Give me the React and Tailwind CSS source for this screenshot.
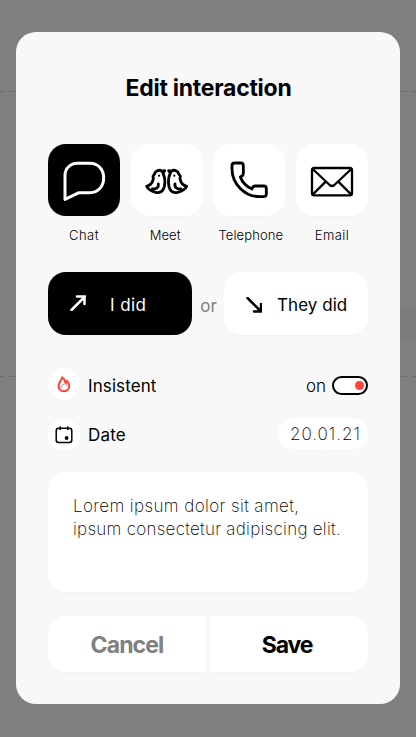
import React from "react";

const stroke = { fill: "none", stroke: "currentColor", strokeLinecap: "round", strokeLinejoin: "round" };

function ChatIcon() {
  return (
    <svg viewBox="0 0 216 216" className="size-[72px]" {...stroke} strokeWidth="9">
      <path d="M51 166V94C51 73 67 58 88 58H126C151 58 167 77 167 102C167 128 150 146 126 146H93Z" />
    </svg>
  );
}

function Bird() {
  return (
    <g>
      <path d="M47 127C57 124 65 116 67 104L66 97L70 91C73 79 86 76 93 82L101 80L96 88C101 98 103 114 100 128C96 143 86 148 74 145C62 142 52 137 47 127Z" />
      <path d="M64 135C76 136 84 130 82 120" />
      <circle cx="84" cy="95" r="3.2" fill="currentColor" stroke="none" />
    </g>
  );
}

function MeetIcon() {
  return (
    <svg viewBox="0 0 216 216" className="size-[72px]" {...stroke} strokeWidth="8.5">
      <Bird />
      <g transform="translate(214 0) scale(-1 1)"><Bird /></g>
    </svg>
  );
}

function PhoneIcon() {
  return (
    <svg viewBox="0 0 216 216" className="size-[72px]" {...stroke} strokeWidth="8.5">
      <path d="M65 57H83Q91 57 91 65V88Q91 94 87 96L82 99C88 115 101 128 117 135L119 130Q121 126 126 126H152Q160 126 160 134V150Q160 158 152 158H141C95 158 57 120 57 74V65Q57 57 65 57Z" />
    </svg>
  );
}

function EmailIcon() {
  return (
    <svg viewBox="0 0 216 216" className="size-[72px]" {...stroke} strokeWidth="7">
      <rect x="48" y="72" width="120" height="82" rx="7" />
      <path d="M50 75L101 123Q108 129 115 123L166 75M50 152L89 113M166 152L127 113" />
    </svg>
  );
}

function Channel({ label, active, children, labelClass }) {
  return (
    <button className="flex w-[72px] flex-col items-center">
      <span className={active
        ? "flex size-[72px] rounded-[18px] bg-black text-white"
        : "flex size-[72px] rounded-[18px] bg-white text-black shadow-[0_1px_1px_rgba(0,0,0,0.025)]"}>
        {children}
      </span>
      <span className={"mt-[9px] whitespace-nowrap text-[13px] leading-5 font-light " + labelClass}>{label}</span>
    </button>
  );
}

function BackdropLine() {
  return (
    <div className="flex h-px w-full justify-between">
      <div className="flex gap-[5px]"><i className="w-1 bg-[#6c6c6c]" /><i className="w-[7px] bg-[#6c6c6c]" /></div>
      <div className="flex gap-[5px]"><i className="w-[7px] bg-[#6c6c6c]" /><i className="w-1 bg-[#6c6c6c]" /></div>
    </div>
  );
}

export default function App() {
  return (
    <div className="relative h-[737px] w-[416px] overflow-hidden bg-[#808080] px-4 pt-8 font-['Inter',sans-serif] text-black">
      <div className="absolute inset-0 flex flex-col pt-[91px]">
        <BackdropLine />
        <div className="mt-[216px] h-8 w-6 self-end rounded-l bg-[#7b7b7b]" />
        <div className="mt-9"><BackdropLine /></div>
      </div>
      <main className="relative flex h-[672px] flex-col rounded-[20px] bg-[#f8f8f8] px-8">
        <h1 className="mt-10 pl-px text-center text-[23px] leading-8 font-bold tracking-[-0.25px]">Edit interaction</h1>

        <div className="mt-10 flex h-[102px] justify-between">
          <Channel label="Chat" active labelClass="tracking-[0.5px]"><ChatIcon /></Channel>
          <Channel label="Meet" labelClass="mr-[3px] tracking-[0.1px]"><MeetIcon /></Channel>
          <Channel label="Telephone" labelClass="ml-[3px] tracking-[0.1px]"><PhoneIcon /></Channel>
          <Channel label="Email" labelClass="tracking-[0.4px]"><EmailIcon /></Channel>
        </div>

        <div className="mt-[26px] flex h-[63px] items-center">
          <button className="flex h-full w-36 items-center rounded-[18px] bg-black pl-[22px] text-white">
            <svg viewBox="0 0 16 16" className="size-4 -translate-y-px" {...stroke} strokeWidth="2.5">
              <path d="M1.5 15L15 1.5M7 1.5H14.5V9" />
            </svg>
            <span className="ml-6 pt-[5px] text-[17px] tracking-[0.4px]">I did</span>
          </button>
          <span className="w-8 pt-[6px] pl-px text-center text-[17px] text-[#808080]">or</span>
          <button className="flex h-full w-36 items-center rounded-[18px] bg-white pl-[22px] shadow-[0_1px_1px_rgba(0,0,0,0.025)]">
            <svg viewBox="0 0 16 16" className="size-4 shrink-0 translate-y-px" {...stroke} strokeWidth="2.5">
              <path d="M1.5 1L15 14.5M8 14.5H15V7" />
            </svg>
            <span className="ml-[15px] pt-[5px] text-[17px] whitespace-nowrap tracking-[0.05px]">They did</span>
          </button>
        </div>

        <div className="mt-[33px] flex h-8 items-center">
          <span className="flex size-8 items-center justify-center rounded-full bg-white text-[#ff453a]">
            <svg viewBox="0 0 32 32" className="size-8" {...stroke} strokeWidth="2">
              <path d="M14 9.2C14.2 12.3 10.5 14 10.5 18.2C10.5 21.3 12.8 23.2 15.9 23.2C19.1 23.2 21.2 21 21.2 18.1C21.2 16 20.4 14.4 19 12.8C18.8 13.8 18.4 14.6 17.6 15.3C17.6 12.8 16 10.6 14 9.2Z" />
              <path d="M15.5 16.3C14.3 17.6 12.8 18.5 12.6 20M17.6 15.5L18.3 17.2" strokeWidth="0.9" />
            </svg>
          </span>
          <span className="ml-2 pt-[6px] text-[17px] tracking-[0.1px]">Insistent</span>
          <span className="ml-auto pt-[6px] text-[17px] font-light">on</span>
          <span className="ml-[6px] mt-[3px] flex h-[19px] w-9 items-center justify-end rounded-full border-2 border-black bg-white pr-[2px]">
            <i className="size-[9px] rounded-full bg-[#ff453a]" />
          </span>
        </div>

        <div className="mt-[19px] flex h-8 items-center">
          <span className="flex size-8 items-center justify-center rounded-full bg-white">
            <svg viewBox="0 0 32 32" className="size-8" {...stroke} strokeWidth="1.5">
              <rect x="8.2" y="9.2" width="15.6" height="14.2" rx="2.5" />
              <path d="M12.2 8V10.5M19.8 8V10.5" />
              <circle cx="18.6" cy="19" r="1.9" fill="currentColor" stroke="none" />
            </svg>
          </span>
          <span className="ml-2 pt-[2px] text-[17px] tracking-[0.2px]">Date</span>
          <span className="ml-auto -mt-[3px] flex h-[31px] w-[90px] items-center justify-end rounded-full bg-white pt-[2px] pr-[7px] text-[17px] font-extralight tracking-[1px]">20.01.21</span>
        </div>

        <div className="mt-[21px] h-[120px] shrink-0 rounded-[18px] bg-white px-[25px] pt-[23px] text-[17px] leading-[23px] font-extralight whitespace-nowrap shadow-[0_1px_1px_rgba(0,0,0,0.025)]">
          <p className="tracking-[0.4px]">Lorem ipsum dolor sit amet,</p>
          <p className="tracking-[0.28px]">ipsum consectetur adipiscing elit.</p>
        </div>

        <div className="mt-6 flex h-14 shrink-0 gap-1 text-[23px] font-bold">
          <button className="w-[158px] rounded-l-[18px] bg-white pt-[2px] tracking-[-0.9px] text-[#808080] shadow-[0_1px_1px_rgba(0,0,0,0.025)]">Cancel</button>
          <button className="w-[158px] rounded-r-[18px] bg-white pt-[2px] pr-1 tracking-[-1.2px] shadow-[0_1px_1px_rgba(0,0,0,0.025)]">Save</button>
        </div>
      </main>
    </div>
  );
}
